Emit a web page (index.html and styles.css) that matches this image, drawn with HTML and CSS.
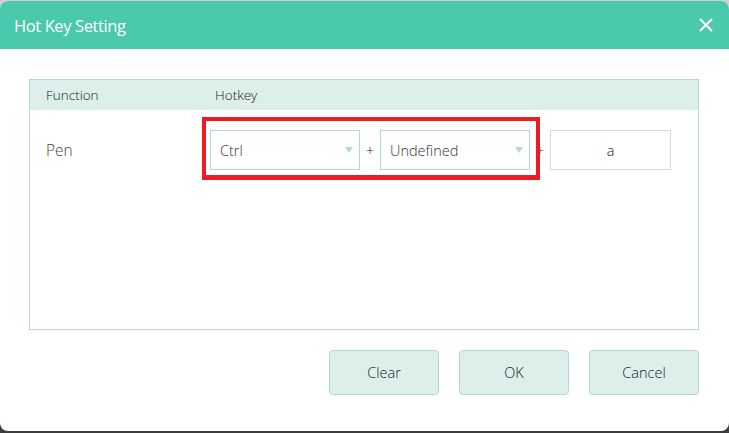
FILE: index.html
```html
<!DOCTYPE html>
<html lang="en">
<head>
    <meta charset="UTF-8">
    <title>Hot Key Setting</title>
    <link rel="stylesheet" href="styles.css">
</head>
<body>
    <div class="dialog">
        <div class="titlebar">
            <span class="title">Hot Key Setting</span>
            <svg class="close" width="14" height="14" viewBox="0 0 14 14">
                <path d="M1 1 L13 13 M13 1 L1 13" stroke="#fff" stroke-width="2" fill="none"/>
            </svg>
        </div>
        <div class="content">
            <div class="table">
                <div class="table-head">
                    <span class="col-func">Function</span>
                    <span class="col-key">Hotkey</span>
                </div>
                <div class="table-row">
                    <span class="func-name">Pen</span>
                    <div class="keys">
                        <div class="select"><span>Ctrl</span><i class="arrow"></i></div>
                        <span class="plus">+</span>
                        <div class="select"><span>Undefined</span><i class="arrow"></i></div>
                        <span class="plus">+</span>
                        <div class="key-input">a</div>
                        <div class="mark"></div>
                    </div>
                </div>
            </div>
            <div class="buttons">
                <button>Clear</button>
                <button>OK</button>
                <button>Cancel</button>
            </div>
        </div>
    </div>
</body>
</html>
```

FILE: styles.css
```css
html, body {
    margin: 0;
    padding: 0;
}
body {
    width: 729px;
    height: 433px;
    overflow: hidden;
    background: linear-gradient(#cfcfcf 0, #cfcfcf 50%, #3d3d3d 50%);
    font-family: "Open Sans", "Noto Sans", sans-serif;
    font-weight: 300;
}
.dialog {
    margin-top: 1px;
    height: 430px;
    background: #fff;
    border-radius: 8px;
    overflow: hidden;
}
.titlebar {
    height: 48px;
    background: #4ac9ad;
    display: flex;
    align-items: center;
    justify-content: space-between;
    padding: 0 16px 0 14px;
}
.title {
    color: #fff;
    font-size: 16.5px;
    font-weight: 400;
    letter-spacing: -0.4px;
}
.close {
    display: block;
}
.content {
    padding: 30px 30px 0 29px;
}
.table {
    height: 251px;
    border: 1px solid #b3d8ce;
    box-sizing: border-box;
}
.table-head {
    height: 30px;
    background: #dcefea;
    display: flex;
    align-items: center;
    font-size: 13.5px;
    color: #222;
}
.col-func {
    width: 169px;
    padding-left: 16px;
}
.table-row {
    display: flex;
    align-items: center;
    padding-top: 20px;
}
.func-name {
    width: 164px;
    padding-left: 16px;
    font-size: 15.5px;
    color: #444;
}
.keys {
    position: relative;
    display: flex;
    align-items: center;
}
.select {
    width: 150px;
    height: 40px;
    box-sizing: border-box;
    border: 1px solid #b3d8ce;
    display: flex;
    align-items: center;
    justify-content: space-between;
    padding: 0 6px 0 9px;
    font-size: 14.5px;
    color: #333;
}
.arrow {
    width: 0;
    height: 0;
    border-left: 4px solid transparent;
    border-right: 4px solid transparent;
    border-top: 6px solid #b5dcd1;
}
.plus {
    width: 20px;
    text-align: center;
    font-size: 14px;
    color: #222;
}
.key-input {
    width: 121px;
    height: 40px;
    box-sizing: border-box;
    border: 1px solid #d9d9d9;
    display: flex;
    align-items: center;
    justify-content: center;
    font-size: 14.5px;
    color: #222;
}
.mark {
    position: absolute;
    left: -8px;
    top: -13px;
    width: 338px;
    height: 63px;
    box-sizing: border-box;
    border: 4px solid #ed1c24;
    border-bottom-width: 5px;
}
.buttons {
    display: flex;
    justify-content: flex-end;
    gap: 20px;
    margin-top: 20px;
}
.buttons button {
    width: 110px;
    height: 45px;
    background: #dcefea;
    border: 1px solid #b3d8ce;
    border-radius: 4px;
    font-family: "Open Sans", "Noto Sans", sans-serif;
    font-weight: 300;
    font-size: 14.5px;
    color: #222;
}
```
